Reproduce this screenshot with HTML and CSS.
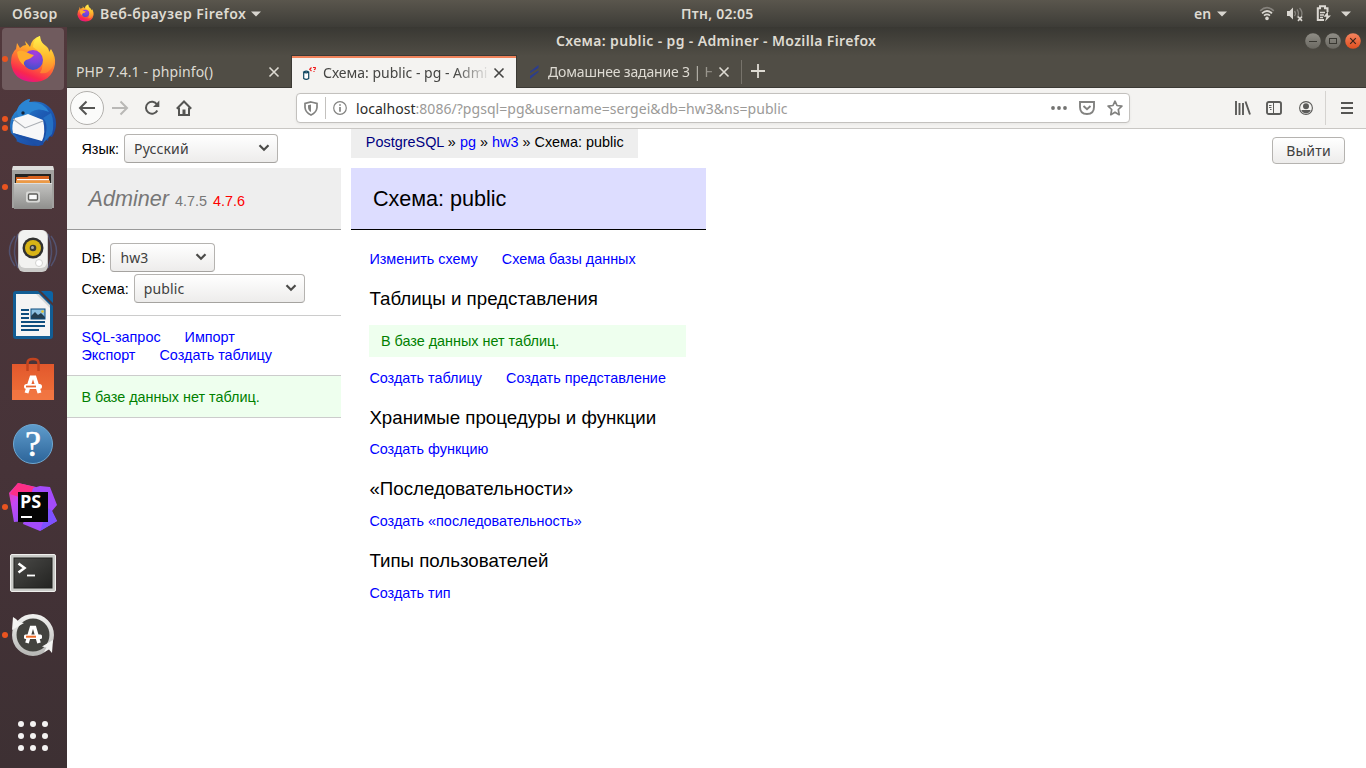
FILE: index.html
```html
<!DOCTYPE html>
<html lang="ru">
<head>
<meta charset="utf-8">
<title>Схема: public - pg - Adminer</title>
<link rel="stylesheet" href="styles.css">
</head>
<body>
<svg class="defs" width="0" height="0" aria-hidden="true">
  <defs>
    <linearGradient id="fire" x1="0.75" y1="0" x2="0.35" y2="1"><stop offset="0" stop-color="#fff44f"/><stop offset=".3" stop-color="#ffb52c"/><stop offset=".6" stop-color="#ff6a35"/><stop offset=".85" stop-color="#f9274f"/><stop offset="1" stop-color="#e4158a"/></linearGradient>
    <radialGradient id="globe" cx=".6" cy=".15" r=".9"><stop offset="0" stop-color="#a53be0"/><stop offset=".5" stop-color="#7a45dc"/><stop offset="1" stop-color="#3a52c8"/></radialGradient>
    <linearGradient id="flame" x1="0" y1="0" x2="0" y2="1"><stop offset="0" stop-color="#fff34e"/><stop offset=".6" stop-color="#ffb52c"/><stop offset="1" stop-color="#ff7a33"/></linearGradient>
    <linearGradient id="bird" x1="0" y1="0" x2="1" y2="1"><stop offset="0" stop-color="#2f96dc"/><stop offset=".5" stop-color="#1d5cb5"/><stop offset="1" stop-color="#1a3f96"/></linearGradient>
    <linearGradient id="steel" x1="0" y1="0" x2="0" y2="1"><stop offset="0" stop-color="#c4c4c2"/><stop offset="1" stop-color="#8f8f8d"/></linearGradient>
    <linearGradient id="bag" x1="0" y1="0" x2="0" y2="1"><stop offset="0" stop-color="#e2582c"/><stop offset="1" stop-color="#f0723a"/></linearGradient>
    <linearGradient id="help" x1="0" y1="0" x2="0" y2="1"><stop offset="0" stop-color="#5f9ccc"/><stop offset="1" stop-color="#2c6499"/></linearGradient>
    <linearGradient id="psa" x1="0" y1="0" x2="1" y2="1"><stop offset="0" stop-color="#ff318c"/><stop offset=".35" stop-color="#c747f2"/><stop offset="1" stop-color="#6b57ff"/></linearGradient>
    <linearGradient id="term" x1="0" y1="0" x2="1" y2="1"><stop offset="0" stop-color="#4a4a48"/><stop offset="1" stop-color="#232321"/></linearGradient>
    <linearGradient id="ring" x1="0" y1="0" x2="0" y2="1"><stop offset="0" stop-color="#efefed"/><stop offset="1" stop-color="#b9b9b7"/></linearGradient>
    <linearGradient id="knob" x1="0" y1="0" x2="0" y2="1"><stop offset="0" stop-color="#8f8d86"/><stop offset="1" stop-color="#6a6861"/></linearGradient>
    <linearGradient id="knob-close" x1="0" y1="0" x2="0" y2="1"><stop offset="0" stop-color="#f4845f"/><stop offset="1" stop-color="#e24f1f"/></linearGradient>
    <symbol id="firefox" viewBox="0 0 46 48">
      <path fill="url(#fire)" d="M7 8 L10 13 Q13 10 16 10 L15 6 Q18 9 20 12 Q22 3 30 1 Q30 7 36 11 Q39 13 39 17 L41 14 Q46 22 45 29 Q42 47 23 47 Q3 46 1 28 Q1 18 6 14 Z"/>
      <path fill="url(#flame)" d="M23 12 Q23 4 30 1 Q30 7 35 11 Q39 14 39 18 L41 15 Q45 23 43 31 Q38 40 30 38 Q35 31 30 19 Q27 14 23 12Z"/>
      <circle cx="23" cy="25" r="10" fill="url(#globe)"/>
      <path fill="#ffac2d" d="M7 17 Q10 14 16 17 Q22 20 24 20 Q21 24 16 25 Q12 28 15 31 Q8 27 7 17Z"/>
    </symbol>
    <symbol id="cross" viewBox="0 0 12 12"><path d="M1.5 1.5 L10.5 10.5 M10.5 1.5 L1.5 10.5" fill="none" stroke="currentColor" stroke-width="1.6"/></symbol>
    <symbol id="chevron" viewBox="0 0 12 8"><path d="M1.5 1.2 L6 5.7 L10.5 1.2" fill="none" stroke="#4b4b49" stroke-width="2.2"/></symbol>
    <symbol id="triangle" viewBox="0 0 10 6"><path d="M0 .5 H10 L5 5.5Z" fill="#d8d5cf"/></symbol>
  </defs>
</svg>

<header class="panel">
  <span class="activities">Обзор</span>
  <svg class="app-icon" width="17" height="18"><use href="#firefox"/></svg>
  <span class="app-name">Веб-браузер Firefox</span>
  <svg class="app-arrow" width="10" height="6"><use href="#triangle"/></svg>
  <span class="clock">Птн, 02:05</span>
  <span class="lang-ind">en</span>
  <svg class="lang-arrow" width="10" height="6"><use href="#triangle"/></svg>
  <svg class="wifi" width="16" height="15" viewBox="0 0 16 15" fill="none" stroke="#dbd8d2"><path d="M1.2 4.8 Q8 -1.5 14.8 4.8" stroke="#85827c" stroke-width="1.6"/><path d="M3 7.3 Q8 2.7 13 7.3" stroke-width="1.7"/><path d="M5 9.7 Q8 7.2 11 9.7" stroke-width="1.7"/><circle cx="8" cy="12.4" r="1.8" fill="#dbd8d2" stroke="none"/></svg>
  <svg class="sound" width="18" height="16" viewBox="0 0 18 16" fill="none"><path d="M1 5 H3.5 L7 1.5 V13.5 L3.5 10 H1Z" fill="#dbd8d2"/><path d="M8.5 5 Q10.5 7.5 8.5 10 M11 3.5 Q14 7.5 11 11.5 M13.5 2 Q17 6 15.5 10" stroke="#85827c" stroke-width="1.3"/><path d="M12 10.5 L16 14.8 M16 10.5 L12 14.8" stroke="#dbd8d2" stroke-width="1.7"/></svg>
  <svg class="battery" width="16" height="17" viewBox="0 0 16 17" fill="none" stroke="#dbd8d2"><path d="M8 15 H1.8 V3.2 H4 V1.2 H9 V3.2 H11.5 V7" stroke-width="2"/><path d="M4 7.5 H9 M4 10 H8 M4 12.5 H7" stroke-width="1.4"/><path d="M12 6.5 L7.5 11.8 H10.5 L9 16.5 L15 10.5 H12Z" fill="#dbd8d2" stroke="none"/></svg>
  <svg class="sys-arrow" width="10" height="6"><use href="#triangle"/></svg>
</header>

<div class="desktop">
  <nav class="dock">
    <div class="slot active"><i class="dot"></i><svg width="46" height="48"><use href="#firefox"/></svg></div>
    <div class="slot two"><i class="dot"></i><i class="dot"></i>
      <svg width="48" height="48" viewBox="0 0 48 48"><path fill="url(#bird)" d="M10 7 Q15 1 21 0 L20 3 Q38 0 45 15 Q50 27 43 38 L40 37 L39 42 L36 40 L34 46 L29 47 Q16 47 7 42 Q10 42 2 34 Q-2 20 9 10Z"/><path fill="#2b85d3" d="M10 7 Q15 1 21 0 L20 3 Q34 2 40 13 Q29 8 22 13 Q18 20 10 19 Q6 12 10 7Z"/><path fill="#f7f7f8" d="M6 19 Q14 17 19 15 L34 21 Q37 34 33 42 L4 34 Q2 26 6 19Z"/><path d="M4 20 L16 29 L34 22" stroke="#a9adb3" stroke-width="1.1" fill="none"/><path fill="#1c50a7" d="M4 34 L10 36 L30 42 L33 45 L29 47 Q22 42 13 39 Q8 38 4 34Z"/><circle cx="14" cy="14" r="1.7" fill="#14243c"/><path d="M34 19 Q41 26 34 44 L43 35 Q46 24 42 14Z" fill="#2470c4"/></svg></div>
    <div class="slot"><i class="dot"></i>
      <svg width="44" height="45" viewBox="0 0 44 45"><path d="M2 1 H42 L43 5 V43 H1 V5Z" fill="#a2a2a0"/><path d="M2 1 H42 L43 5 H1Z" fill="#dededc"/><rect x="4" y="9" width="36" height="10" fill="#242422"/><path d="M5 18 V12 H16 L18 11 H38 V18Z" fill="#d9631f"/><rect x="6" y="14" width="32" height="1.500" fill="#fff"/><path d="M5 15.500 H39 V18 H5Z" fill="#eb9a45"/><path d="M3 18 H41 V44 H3Z" fill="url(#steel)"/><path d="M3 18.500 H41" stroke="#dedede"/><rect x="15" y="26.500" width="14" height="11" rx="2" fill="#d9d9d7"/><rect x="17.500" y="29" width="9" height="6" rx="1" fill="#fafafa" stroke="#5d5d5b" stroke-width="1.4"/></svg></div>
    <div class="slot">
      <svg width="50" height="46" viewBox="0 0 50 46"><path d="M7 8 Q-4 23 7 38 M10 6 Q3 23 10 40 M43 8 Q54 23 43 38 M40 6 Q47 23 40 40" fill="none" stroke="#5a6fa5" stroke-opacity=".5" stroke-width="1.500"/><rect x="10" y="2" width="30" height="42" rx="6" fill="#cbcbc9"/><rect x="11" y="2" width="28" height="38" rx="6" fill="#f2f2f0"/><circle cx="25" cy="20" r="10.500" fill="#31312f"/><circle cx="25" cy="20" r="8" fill="#d8b416"/><circle cx="25" cy="20" r="3.300" fill="#3c3b34"/><circle cx="24.500" cy="19.500" r="1.500" fill="#aaa"/><circle cx="31" cy="35" r="3.500" fill="#fff" stroke="#d2d2d0"/></svg></div>
    <div class="slot">
      <svg width="40" height="48" viewBox="0 0 40 48"><path d="M3 0 H25 L40 15 V45 Q40 48 37 48 H3 Q0 48 0 45 V3 Q0 0 3 0Z" fill="#125d94"/><path d="M28 0 H37 Q40 0 40 3 V12Z" fill="#0c64a5"/><path d="M3 3 H24 L37 16 V45 H3Z" fill="#f4f4f4"/><path d="M23 3 L37 17 V14 L26 3Z" fill="#d6d6d6"/><path d="M8 19 H16 M8 23 H16 M8 27 H16 M8 31 H32 M8 35 H32 M8 39 H26" stroke="#0d4d7e" stroke-width="2"/><rect x="18" y="18" width="14" height="10" fill="#8dc0e1"/><path d="M18 28 V25 L22 21 L25 24 L28 22 L32 26 V28Z" fill="#243e50"/><circle cx="29.500" cy="20.500" r="1.300" fill="#e9c42a"/><rect x="18" y="18" width="14" height="10" fill="none" stroke="#0d4d7e"/></svg></div>
    <div class="slot">
      <svg width="42" height="44" viewBox="0 0 42 44"><rect y="7" width="42" height="36" fill="url(#bag)"/><rect y="33" width="42" height="10" fill="#f37a48" opacity=".6"/><path d="M15.500 14 V6 Q15.500 2 21 2 Q26.500 2 26.500 6 V14" stroke="#c2441f" stroke-width="2.500" fill="none"/><path d="M14.500 36 L19.500 20.500 H22.500 L27.500 36" stroke="#fff" stroke-width="4" fill="none"/><rect x="12" y="27" width="18" height="5" rx="2.500" fill="#fff"/><path d="M14 29.500 H24" stroke="#e9662f" stroke-width="1.800"/></svg></div>
    <div class="slot help">
      <svg width="42" height="42" viewBox="0 0 42 42"><circle cx="21" cy="21" r="19.500" fill="url(#help)" stroke="#6fa8d2" stroke-width="1"/><text x="21" y="33" class="help-mark">?</text></svg></div>
    <div class="slot"><i class="dot"></i>
      <svg width="50" height="50" viewBox="0 0 50 50"><path d="M1 11 L10 1 L28 5 L26 38 L6 40Z" fill="url(#psa)"/><path d="M10 1 L27 5 L20 18 L2 12Z" fill="#fc2f86"/><path d="M25 6 L32 4 L42 5 L49 23 L44 29 L49 39 L32 49 L15 42Z" fill="#a44bfa"/><path d="M40 26 L44 29 L49 39 L32 49Z" fill="#7d52ff"/><rect x="10" y="10" width="30" height="30" fill="#050505"/><text x="12" y="26" class="ps-mark">PS</text><rect x="13" y="34" width="11" height="2" fill="#fff"/></svg></div>
    <div class="slot term">
      <svg width="46" height="38" viewBox="0 0 46 38"><rect x=".5" y=".5" width="45" height="37" rx="1.500" fill="#c9cac7" stroke="#efefed"/><rect x="4" y="4" width="38" height="30" fill="url(#term)" stroke="#20201e"/><path d="M8.500 9.500 L14.500 14 L8.500 18.500" stroke="#fff" stroke-width="2.600" fill="none"/><path d="M17 21.500 H25" stroke="#fff" stroke-width="1.800"/></svg></div>
    <div class="slot"><i class="dot"></i>
      <svg width="44" height="44" viewBox="0 0 44 44"><circle cx="22" cy="22" r="18.700" fill="#43433f" stroke="url(#ring)" stroke-width="4.500"/><path d="M2 4 L5 6 L8 9 L13 10 L1 17Z" fill="#f4f4f2"/><path d="M42 27 L31 33.500 L35.500 34.500 L33 39 L38 36.500 L41 40Z" fill="#f4f4f2"/><path d="M16 30 L20.500 14.500 H23.500 L28 30" stroke="#fff" stroke-width="3.700" fill="none"/><rect x="13" y="21.500" width="18" height="4.500" rx="1.500" fill="#fff"/><path d="M15 23.700 H25" stroke="#ed6a28" stroke-width="2"/></svg></div>
    <svg class="apps" width="32" height="32" viewBox="0 0 32 32" fill="#f4f2f2"><circle cx="4" cy="4" r="3"/><circle cx="16" cy="4" r="3"/><circle cx="28" cy="4" r="3"/><circle cx="4" cy="16" r="3"/><circle cx="16" cy="16" r="3"/><circle cx="28" cy="16" r="3"/><circle cx="4" cy="28" r="3"/><circle cx="16" cy="28" r="3"/><circle cx="28" cy="28" r="3"/></svg>
  </nav>

  <div class="window">
    <div class="titlebar">
      <span class="title">Схема: public - pg - Adminer - Mozilla Firefox</span>
      <div class="controls">
        <svg width="16" height="16" viewBox="0 0 16 16"><circle cx="8" cy="8" r="7.800" fill="url(#knob)"/><path d="M4 8.500 H12" stroke="#393832"/></svg>
        <svg width="16" height="16" viewBox="0 0 16 16"><circle cx="8" cy="8" r="7.800" fill="url(#knob)"/><rect x="4.500" y="5.500" width="7" height="5" fill="none" stroke="#393832"/></svg>
        <svg width="16" height="16" viewBox="0 0 16 16"><circle cx="8" cy="8" r="7.800" fill="url(#knob-close)"/><path d="M5.200 5.200 L10.800 10.800 M10.800 5.200 L5.200 10.800" stroke="#3b241b" stroke-width="1.200"/></svg>
      </div>
    </div>

    <div class="tabs">
      <div class="tab first"><span class="label">PHP 7.4.1 - phpinfo()</span><svg class="close" width="12" height="12"><use href="#cross"/></svg></div>
      <div class="tab current">
        <svg class="favicon" width="15" height="15" viewBox="0 0 15 15" fill="none"><path d="M1.700 6 V12.500 Q4.200 14.300 6.700 12.500 V6 Q4.200 4.300 1.700 6 Q4.200 7.700 6.700 6" fill="#fff" stroke="#0e4660" stroke-width="1.200"/><path d="M9.500 1.500 L7.700 3.300 L9.500 5 M11 1.500 H13.300 V3 L12 3.700 M12 5 V6" stroke="#f01818" stroke-width="1.100"/></svg>
        <span class="label">Схема: public - pg - Admi</span><svg class="close" width="12" height="12"><use href="#cross"/></svg></div>
      <div class="tab last">
        <svg class="favicon" width="9" height="14" viewBox="0 0 9 14" fill="#2b3d8f"><path d="M0 6.500 L8.500 0 V3 L0 8Z"/><path d="M0 11 L8.500 5.500 V7 L0 14Z"/></svg>
        <span class="label">Домашнее задание 3 | Н</span><svg class="close" width="12" height="12"><use href="#cross"/></svg></div>
      <svg class="plus" width="14" height="14" viewBox="0 0 14 14"><path d="M7 0 V14 M0 7 H14" stroke="#dedbd3" stroke-width="1.800"/></svg>
    </div>

    <div class="toolbar">
      <span class="back"><svg width="18" height="16" viewBox="0 0 18 16" fill="none" stroke="#555553" stroke-width="2"><path d="M17 8 H2 M8.500 1.500 L2 8 L8.500 14.500"/></svg></span>
      <svg class="forward" width="17" height="16" viewBox="0 0 17 16" fill="none" stroke="#b9b8b6" stroke-width="2"><path d="M0 8 H15 M8.500 1.500 L15 8 L8.500 14.500"/></svg>
      <svg class="reload" width="16" height="16" viewBox="0 0 16 16" fill="none" stroke="#555553" stroke-width="2"><path d="M13.300 10.500 A6 6 0 1 1 13 4.500"/><path d="M15.300 .5 V7 H9Z" fill="#555553" stroke="none"/></svg>
      <svg class="home" width="16" height="16" viewBox="0 0 16 16" fill="none" stroke="#555553" stroke-width="2"><path d="M.8 8.700 L8 1.500 L15.200 8.700"/><path d="M3 7.500 V15 H13 V7.500"/><path d="M8 14 V9.500" stroke-width="3"/></svg>
      <div class="urlbar">
        <svg class="shield" width="14" height="15" viewBox="0 0 14 15" fill="none" stroke="#828280" stroke-width="1.700"><path d="M7 1 L13 2.500 V6.500 Q12.500 11.500 7 14 Q1.500 11.500 1 6.500 V2.500Z"/><path d="M7 3.500 V11 Q4 9.500 4 6 V4.200Z" fill="#828280" stroke="none"/></svg>
        <i class="divider"></i>
        <svg class="info" width="14" height="14" viewBox="0 0 14 14" fill="none" stroke="#828280"><circle cx="7" cy="7" r="6.300" stroke-width="1.200"/><path d="M7 6 V10.700 M7 3.200 V4.700" stroke-width="1.700"/></svg>
        <span class="url"><b>localhost</b>:8086/?pgsql=pg&amp;username=sergei&amp;db=hw3&amp;ns=public</span>
        <svg class="dots" width="16" height="4" viewBox="0 0 16 4" fill="#737371"><circle cx="2" cy="2" r="1.900"/><circle cx="8" cy="2" r="1.900"/><circle cx="14" cy="2" r="1.900"/></svg>
        <svg class="pocket" width="16" height="14" viewBox="0 0 16 14" fill="none" stroke="#828280" stroke-width="1.900"><path d="M1 1 H15 V6 Q15 13 8 13 Q1 13 1 6Z"/><path d="M4.500 5 L8 8.300 L11.500 5"/></svg>
        <svg class="star" width="16" height="16" viewBox="0 0 16 16" fill="none" stroke="#828280" stroke-width="1.700"><path stroke-linejoin="round" d="M8 1.200 L10 5.500 L14.900 6.100 L11.300 9.500 L12.200 14.700 L8 12.200 L3.800 14.700 L4.700 9.500 L1.100 6.100 L6 5.500Z"/></svg>
      </div>
      <svg class="library" width="16" height="14" viewBox="0 0 16 14" fill="none" stroke="#5b5b59" stroke-width="1.900"><path d="M1 0 V14 M4.500 2 V14 M8 2 V14 M10.500 .5 L15 13.500"/></svg>
      <svg class="sidebar-icon" width="16" height="14" viewBox="0 0 16 14" fill="none" stroke="#5b5b59"><rect x="1" y="1" width="14" height="12" rx="1.800" stroke-width="1.900"/><path d="M7.500 1 V13 M3 4.500 H5.500 M3 6.500 H5.500 M4 8.500 H5.500"/></svg>
      <svg class="account" width="14" height="14" viewBox="0 0 14 14"><circle cx="7" cy="7" r="6.400" fill="none" stroke="#5b5b59" stroke-width="1.100"/><circle cx="7" cy="5.200" r="3" fill="#5b5b59"/><path d="M2.300 9 H11.700 Q10.500 12.200 7 12.200 Q3.500 12.200 2.300 9Z" fill="#5b5b59"/></svg>
      <i class="bar-divider"></i>
      <svg class="burger" width="12" height="12" viewBox="0 0 12 12"><path d="M0 1 H12 M0 6 H12 M0 11 H12" stroke="#555553" stroke-width="2"/></svg>
    </div>

    <div class="page">
      <aside class="menu">
        <div class="lang">Язык: <span class="select s-lang">Русский<svg width="12" height="8"><use href="#chevron"/></svg></span></div>
        <h1><i>Adminer</i> <span class="ver">4.7.5</span> <a class="new">4.7.6</a></h1>
        <div class="dbs">
          <div class="field">DB: <span class="select s-db">hw3<svg width="12" height="8"><use href="#chevron"/></svg></span></div>
          <div class="field">Схема: <span class="select s-ns">public<svg width="12" height="8"><use href="#chevron"/></svg></span></div>
        </div>
        <p class="links"><a>SQL-запрос</a> <a>Импорт</a><br><a>Экспорт</a> <a>Создать таблицу</a></p>
        <p class="message">В базе данных нет таблиц.</p>
      </aside>
      <main class="content">
        <div class="breadcrumb"><a class="visited">PostgreSQL</a> » <a>pg</a> » <a>hw3</a> » Схема: public</div>
        <h2>Схема: public</h2>
        <p class="links top"><a>Изменить схему</a> <a>Схема базы данных</a></p>
        <h3>Таблицы и представления</h3>
        <p class="message">В базе данных нет таблиц.</p>
        <p class="links"><a>Создать таблицу</a> <a>Создать представление</a></p>
        <h3>Хранимые процедуры и функции</h3>
        <p class="links"><a>Создать функцию</a></p>
        <h3>«Последовательности»</h3>
        <p class="links"><a>Создать «последовательность»</a></p>
        <h3>Типы пользователей</h3>
        <p class="links"><a>Создать тип</a></p>
      </main>
      <div class="logout"><button>Выйти</button></div>
    </div>
  </div>
</div>
</body>
</html>
```
FILE: styles.css
```css
* { box-sizing: border-box; }
html, body { margin: 0; height: 768px; overflow: hidden; }
body { font-family: "Noto Sans", "Open Sans", sans-serif; font-size: 14px; display: flex; flex-direction: column; background: #fff; }
svg { display: block; flex: none; }
.defs { position: absolute; }

/* Top panel */
.panel { height: 27px; flex: none; display: flex; align-items: center; background: linear-gradient(#5a564d, #3d3c37); color: #dfdbd2; font-weight: 600; font-size: 14px; letter-spacing: .37px; white-space: nowrap; }
.activities { margin-left: 12px; width: 65px; }
.app-icon { margin-right: 6px; margin-top: -1px; }
.app-name { width: 146px; letter-spacing: .46px; }
.app-arrow { margin-left: 5px; }
.clock { margin-left: 420px; width: 73px; letter-spacing: .28px; }
.lang-ind { margin-left: 440px; width: 23px; letter-spacing: 0; }
.wifi { margin-left: 32px; }
.sound { margin-left: 11px; }
.battery { margin-left: 12px; }
.sys-arrow { margin-left: 9px; }

.desktop { flex: 1; display: flex; min-height: 0; }

/* Launcher */
.dock { width: 67px; flex: none; display: flex; flex-direction: column; align-items: center; background: linear-gradient(#51383c, #463338 60%, #3d3033); padding-top: 1px; }
.slot { position: relative; width: 62px; height: 62px; margin: 0 1px 2px 0; display: flex; align-items: center; justify-content: center; }
.slot.active { background: #705b5e; border-radius: 4px; }
.slot.term { padding-top: 4px; }
.slot.help { padding-top: 2px; }
.dot { position: absolute; left: 0; top: 28px; width: 6px; height: 6px; border-radius: 50%; background: #e95420; }
.two .dot { top: 24px; }
.two .dot + .dot { top: 33px; }
.apps { margin: auto 1px 16px 0; }
.help-mark { font: 36px "Liberation Serif", serif; fill: #fff; stroke: #fff; stroke-width: .6px; text-anchor: middle; }
.ps-mark { font: bold 18px "Open Sans", "Noto Sans", sans-serif; fill: #fff; }

/* Browser window */
.window { flex: 1; display: flex; flex-direction: column; min-width: 0; }
.titlebar { height: 29px; display: flex; align-items: center; background: linear-gradient(#393833, #504d45); color: #dfdbd2; font-weight: 600; font-size: 14px; letter-spacing: .37px; }
.title { margin: -2px 0 0 489px; width: 322px; white-space: nowrap; }
.controls { margin: -2px 0 0 auto; display: flex; gap: 4px; padding-right: 5px; }
.tabs { height: 32px; display: flex; background: #504d45; color: #dedbd3; border-bottom: 1px solid #3b3934; }
.tab { height: 32px; width: 224px; display: flex; align-items: center; }
.label { overflow: hidden; white-space: nowrap; width: 164px; margin-top: -2px; }
.close { margin-left: 6px; }
.first { width: 225px; padding-left: 9px; }
.first .label { width: 186px; letter-spacing: .14px; }
.current { background: #f4f3f1; color: #454543; border-top: 2px solid #f0835b; outline: 1px solid #3b3934; clip-path: inset(-1px -1px 0 -1px); padding-left: 10px; }
.current .favicon { margin-right: 6px; }
.current .label { -webkit-mask-image: linear-gradient(90deg, #000 132px, transparent 168px); mask-image: linear-gradient(90deg, #000 132px, transparent 168px); }
.last .label { letter-spacing: -.16px; -webkit-mask-image: linear-gradient(90deg, #000 140px, transparent 178px); mask-image: linear-gradient(90deg, #000 140px, transparent 178px); }
.last { position: relative; width: 226px; padding-left: 14px; }
.last .favicon { margin-right: 9px; }
.last::after { content: ""; position: absolute; right: 0; top: 4px; height: 24px; width: 1px; background: #77736b; }
.plus { margin: 8px 0 0 9px; }

.toolbar { height: 41px; display: flex; align-items: center; background: #f4f3f1; border-bottom: 1px solid #c9c7c4; }
.back { width: 34px; height: 34px; margin-left: 3px; border: 1px solid #b2b0ad; border-radius: 50%; background: #fbfbfa; display: flex; align-items: center; justify-content: center; }
.forward { margin-left: 8px; }
.reload { margin-left: 15px; }
.home { margin-left: 16px; }
.urlbar { width: 834px; height: 30px; margin-left: 104px; border: 1px solid #c3c1be; border-radius: 4px; background: #fff; display: flex; align-items: center; box-shadow: 0 1px 3px rgba(0,0,0,.06); }
.shield { margin-left: 7px; }
.divider { width: 1px; height: 22px; background: #c3c1be; margin: 0 7px; }
.url { margin-left: 9px; color: #9b9a98; white-space: nowrap; width: 695px; font-size: 14px; letter-spacing: .04px; }
.url b { font-weight: normal; color: #2c2c2a; }
.pocket { margin-left: 12px; }
.star { margin-left: 12px; }
.library { margin-left: 105px; }
.sidebar-icon { margin-left: 15px; }
.account { margin-left: 17px; }
.bar-divider { width: 1px; height: 34px; background: #d5d3d0; margin-left: 12px; }
.burger { margin-left: 15px; }

/* Adminer page */
.page { flex: 1; display: flex; background: #fff; color: #000; font: 14.4px/18px "Liberation Sans", Arial, sans-serif; }
.page a { color: #00f; text-decoration: none; }
.page .visited { color: navy; }
.menu { width: 273.6px; margin-right: 10.8px; }
.lang { height: 38.8px; padding: 6px 14.4px 4px; display: flex; align-items: center; gap: 5px; }
h1, h2 { margin: 0; padding: 17.28px 21.6px; font-size: 21.6px; line-height: 27px; font-weight: normal; }
h1 { background: #eee; color: #777; border-bottom: 1px solid #999; height: 62.5px; white-space: nowrap; }
h1 .ver, h1 a { font-size: 14.4px; }
.page .new { color: #f00; }
.dbs { padding: 12px 14.4px 11px; border-bottom: 1px solid #ccc; height: 85.6px; }
.field { height: 31px; display: flex; align-items: center; gap: 5px; }
.select { display: flex; align-items: center; justify-content: space-between; height: 29px; padding: 0 7px 1px 9px; border: 1px solid #b5b3b0; border-bottom-color: #a5a3a0; border-radius: 4px; background: linear-gradient(#fff, #edeceb); color: #40403e; font: 14px "Noto Sans", sans-serif; letter-spacing: .15px; }
.lang .select { margin-top: -1px; }
.s-lang { width: 154px; }
.s-db { width: 105px; }
.s-ns { width: 171px; }
.menu p { margin: 0; padding: 12.3px 14.4px 10.74px; border-bottom: 1px solid #ccc; }
.links a { margin-right: 20px; white-space: nowrap; }
.message { color: green; background: #efe; }
.content { width: 355px; padding-left: 18px; }
.breadcrumb { width: 287px; height: 28.8px; line-height: 26px; margin: 0 0 10px -18px; padding: 0 14.4px; background: #eee; white-space: nowrap; letter-spacing: .02px; }
h2 { margin-left: -18px; background: #ddf; border-bottom: 1px solid #000; height: 62.5px; }
.content p { margin: 11.52px 20px 0 0; }
.content .top { margin-top: 20px; }
.content h3 { margin: 18.92px 0 0; font-size: 18.72px; line-height: 23.4px; font-weight: normal; white-space: nowrap; }
.content h3 + .links { margin-top: 11.32px; }
.content .message { margin-top: 14.2px; padding: 7.2px 11.52px; }
.logout { margin-left: auto; padding: 8px 21px 0 0; }
.logout button { display: block; width: 73px; height: 27px; padding: 0; border: 1px solid #b5b3b0; border-radius: 4px; background: linear-gradient(#fff, #edeceb); color: #40403e; font: 14px "Noto Sans", sans-serif; letter-spacing: .2px; }
```
